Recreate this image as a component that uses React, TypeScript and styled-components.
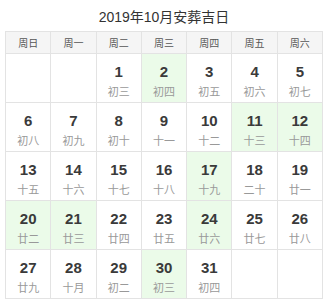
import React from "react";
import styled, { createGlobalStyle } from "styled-components";

const Global = createGlobalStyle`
  html, body { margin: 0; padding: 0; background: #fff; }
  body { font-family: "Liberation Sans", "Noto Sans CJK SC", sans-serif; }
`;

const Wrap = styled.div`
  width: 328px;
  padding: 0 5px;
  box-sizing: border-box;
`;

const Title = styled.div`
  height: 31px;
  display: flex;
  align-items: center;
  justify-content: center;
  font-family: "Liberation Sans", "Noto Sans CJK SC", sans-serif;
  font-size: 14px;
  color: #333;
`;

const Grid = styled.div`
  display: grid;
  grid-template-columns: repeat(7, 1fr);
  grid-template-rows: 22px repeat(5, 49px);
  border-top: 1px solid #e3e3e3;
  border-left: 1px solid #e3e3e3;
  width: 318px;
  box-sizing: border-box;
`;

const Head = styled.div`
  background: #f5f5f5;
  border-right: 1px solid #e3e3e3;
  border-bottom: 1px solid #e3e3e3;
  display: flex;
  align-items: center;
  justify-content: center;
  font-family: "Noto Sans CJK SC", sans-serif;
  font-size: 10px;
  color: #555;
`;

const Cell = styled.div<{ $hl?: boolean }>`
  background: ${(p) => (p.$hl ? "#ebfbe9" : "#fff")};
  border-right: 1px solid #e3e3e3;
  border-bottom: 1px solid #e3e3e3;
  display: flex;
  flex-direction: column;
  align-items: center;
  padding-top: 9px;
  box-sizing: border-box;
`;

const Num = styled.div`
  font-family: "Liberation Sans", sans-serif;
  font-weight: bold;
  font-size: 15px;
  line-height: 18px;
  color: #3a3a3a;
`;

const Lunar = styled.div`
  font-family: "Noto Sans CJK SC", sans-serif;
  font-size: 11px;
  line-height: 14px;
  margin-top: 3px;
  color: #999;
`;

const heads = ["周日", "周一", "周二", "周三", "周四", "周五", "周六"];
const lunar = [
  "初三", "初四", "初五", "初六", "初七", "初八", "初九", "初十", "十一", "十二",
  "十三", "十四", "十五", "十六", "十七", "十八", "十九", "二十", "廿一", "廿二",
  "廿三", "廿四", "廿五", "廿六", "廿七", "廿八", "廿九", "十月", "初二", "初三", "初四",
];
const hl = new Set([2, 11, 12, 17, 20, 21, 24, 30]);

export default function App() {
  const cells: (number | null)[] = [null, null];
  for (let d = 1; d <= 31; d++) cells.push(d);
  while (cells.length < 35) cells.push(null);
  return (
    <Wrap>
      <Global />
      <Title>2019年10月安葬吉日</Title>
      <Grid>
        {heads.map((h) => (
          <Head key={h}>{h}</Head>
        ))}
        {cells.map((d, i) =>
          d === null ? (
            <Cell key={i} />
          ) : (
            <Cell key={i} $hl={hl.has(d)}>
              <Num>{d}</Num>
              <Lunar>{lunar[d - 1]}</Lunar>
            </Cell>
          )
        )}
      </Grid>
    </Wrap>
  );
}
